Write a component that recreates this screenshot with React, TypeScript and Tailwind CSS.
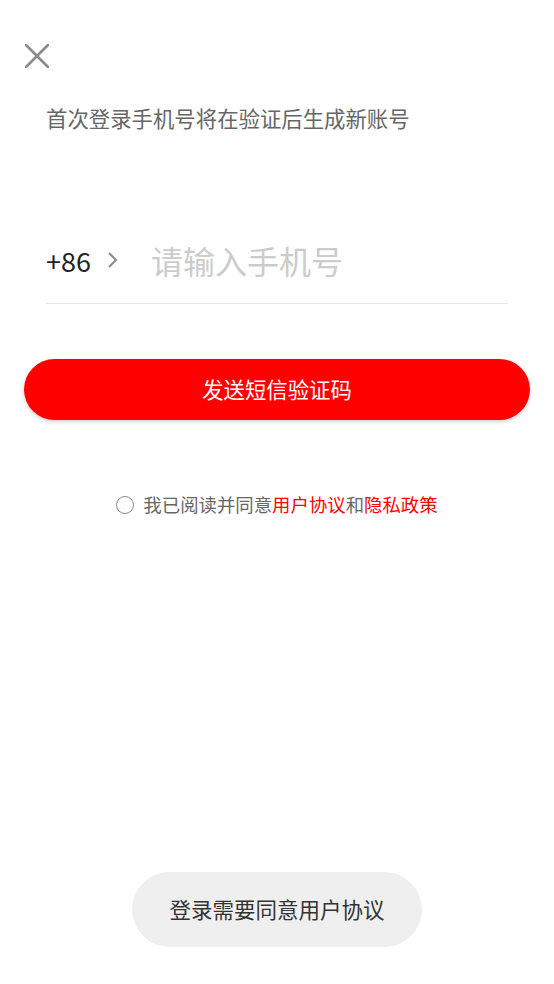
export default function App() {
  return (
    <div
      className="relative w-[554px] h-[984px] bg-white overflow-hidden"
      style={{ fontFamily: '"Noto Sans CJK SC", "Noto Sans", sans-serif' }}
    >
      {/* Close */}
      <div className="pt-[44px] pl-[25px]">
        <svg width="24" height="24" viewBox="0 0 24 24" className="block">
          <path d="M1 1 L23 23 M23 1 L1 23" stroke="#8a8a8a" strokeWidth="2.6" strokeLinecap="round" />
        </svg>
      </div>

      <div className="px-[46px]">
        <p className="mt-[35px] text-[21.4px] leading-[30px] text-[#666666]">首次登录手机号将在验证后生成新账号</p>

        {/* Phone input */}
        <div className="mt-[97px] flex items-center h-[60px]">
          <span className="text-[27px] leading-none text-[#222222]">+86</span>
          <svg width="11" height="18" viewBox="0 0 11 18" className="ml-[16px] shrink-0">
            <path d="M2 2 L9 9 L2 16" fill="none" stroke="#8a8a8a" strokeWidth="2" />
          </svg>
          <input
            type="tel"
            placeholder="请输入手机号"
            className="ml-[33px] flex-1 min-w-0 bg-transparent outline-none text-[32px] text-[#333333] placeholder:text-[#cccccc]"
          />
        </div>
        <div className="mt-[13px] h-px bg-[#e6e6e6]" />
      </div>

      {/* Send code */}
      <div className="px-[24px] mt-[55px]">
        <button
          type="button"
          className="w-full h-[61px] rounded-full bg-[#ff0000] text-white text-[21.4px] shadow-[0_2px_4px_rgba(0,0,0,0.18)]"
        >
          发送短信验证码
        </button>
      </div>

      {/* Agreement */}
      <div className="mt-[70px] h-[30px] flex items-center justify-center text-[18.4px] text-[#666666]">
        <span className="w-[18px] h-[18px] rounded-full border-[1.5px] border-[#8a8a8a] mr-[9px]" />
        <span>我已阅读并同意</span>
        <span className="text-[#ff0000]">用户协议</span>
        <span>和</span>
        <span className="text-[#ff0000]">隐私政策</span>
      </div>

      {/* Toast */}
      <div className="absolute left-[132px] bottom-[37px] w-[290px] h-[75px] rounded-full bg-[#efefef] flex items-center justify-center text-[21.5px] text-[#333333]">
        登录需要同意用户协议
      </div>
    </div>
  );
}
